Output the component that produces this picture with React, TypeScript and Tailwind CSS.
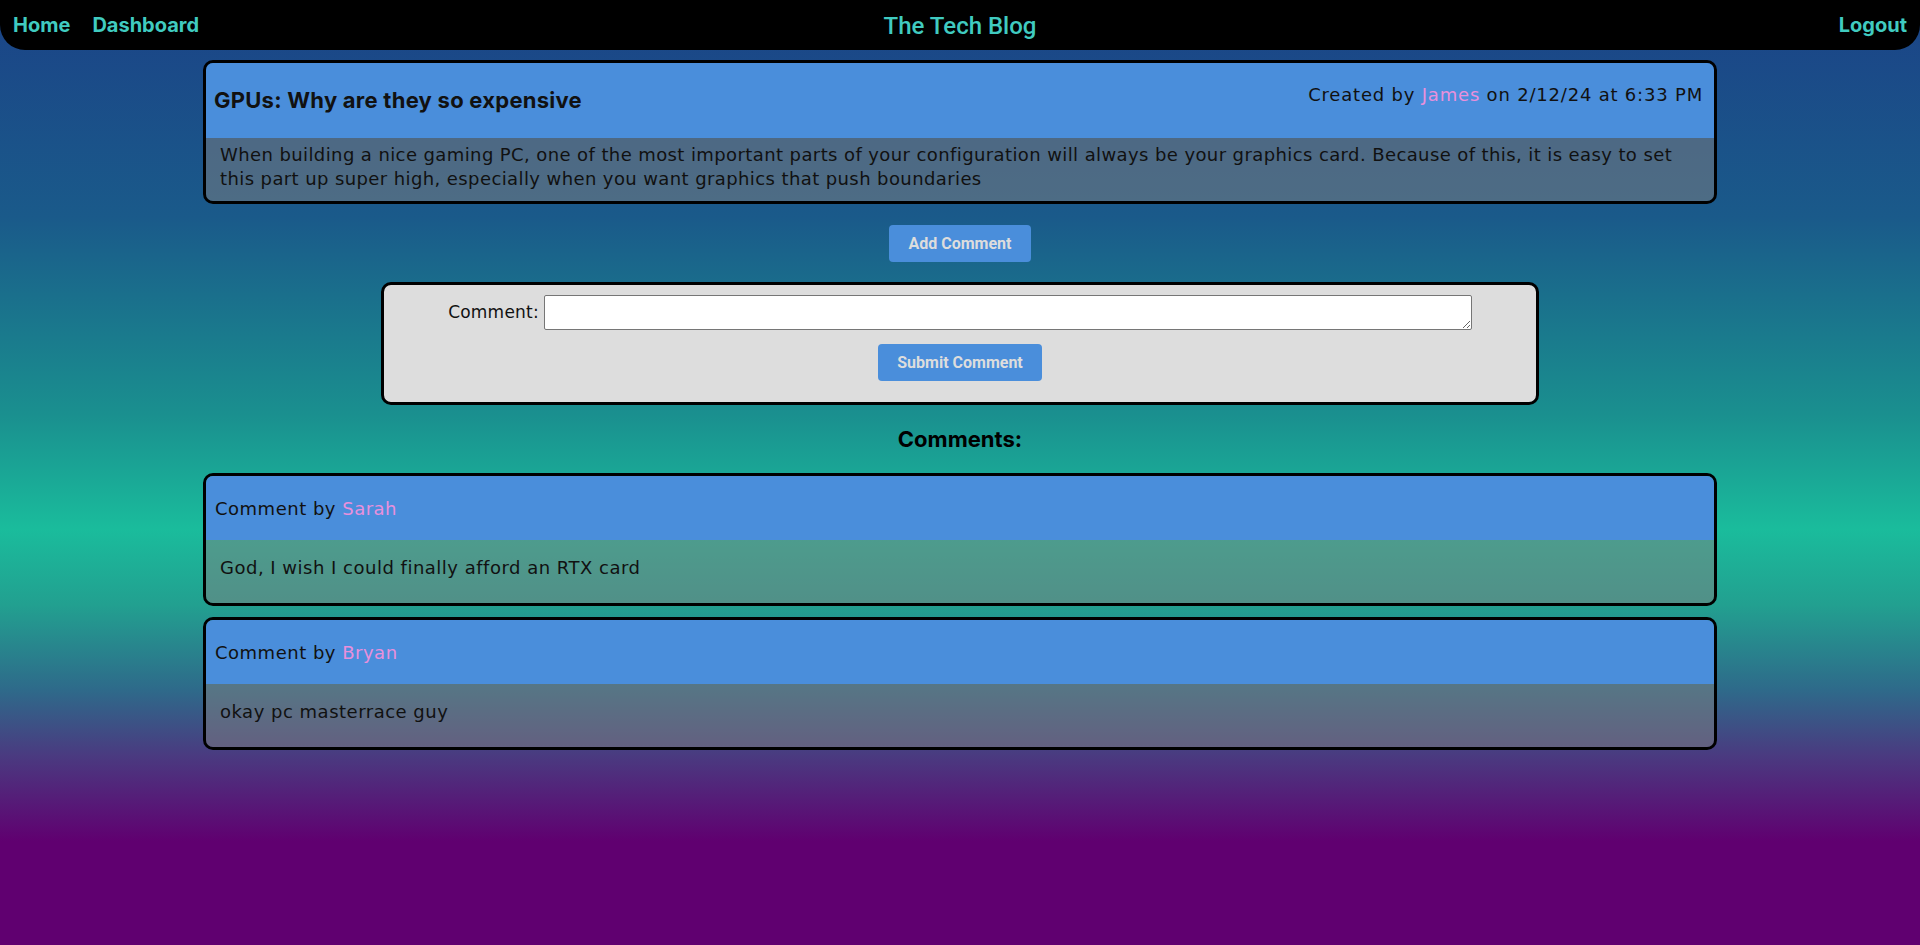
import React from "react";

const F = { fontFamily: "Inter, 'Noto Sans', sans-serif" };
const D = { fontFamily: "'DejaVu Sans', Inter, sans-serif" };
const R = { fontFamily: "Roboto, 'Liberation Sans', sans-serif" };

function CommentCard({ name, text }: { name: string; text: string }) {
  return (
    <div className="w-[1514px] border-[3px] border-black rounded-[10px] overflow-hidden">
      <div
        style={D}
        className="h-[64px] bg-[#4a8edb] flex items-center pl-[9px] text-[18px] tracking-[0.5px] text-[#111]"
      >
        <span>
          Comment by <span className="text-[#e990dc]">{name}</span>
        </span>
      </div>
      <div
        style={D}
        className="h-[63px] bg-[rgba(128,128,128,0.5)] flex items-center pl-[14px] pb-[9px] text-[18px] tracking-[0.5px] text-[#111]"
      >
        {text}
      </div>
    </div>
  );
}

export default function App() {
  return (
    <div
      style={F}
      className="min-h-[945px] w-full bg-[linear-gradient(180deg,#1b4387_0%,#1a5a8a_23%,#1a908f_44%,#1abc9c_56%,#22a090_64%,#2e6a8a_73%,#4a3a80_80%,#600070_89%,#600070_100%)]"
    >
      <nav className="h-[50px] bg-black rounded-b-[25px] flex items-center justify-between px-[13px] relative">
        <div className="flex gap-[22px] text-[20px] font-bold text-[#40cbc0]">
          <span>Home</span>
          <span>Dashboard</span>
        </div>
        <div
          style={R}
          className="absolute left-1/2 -translate-x-1/2 top-[8px] text-[24px] font-medium text-[#40cbc0]"
        >
          The Tech Blog
        </div>
        <span className="text-[20px] font-bold text-[#40cbc0]">Logout</span>
      </nav>

      <div className="flex flex-col items-center">
        <div className="mt-[10px] w-[1514px] border-[3px] border-black rounded-[10px] overflow-hidden">
          <div className="h-[75px] bg-[#4a8edb] flex items-center justify-between pl-[8px] pr-[11px]">
            <h2 className="text-[22px] font-bold text-[#111] tracking-[0.25px]">GPUs: Why are they so expensive</h2>
            <p style={D} className="text-[18px] tracking-[0.8px] text-[#111] mb-[13px]">
              Created by <span className="text-[#e990dc]">James</span> on 2/12/24 at 6:33 PM
            </p>
          </div>
          <div
            style={D}
            className="bg-[rgba(128,128,128,0.5)] pl-[14px] pr-[20px] pt-[5px] pb-[10px] text-[18px] tracking-[0.4px] leading-[24px] text-[#111]"
          >
            When building a nice gaming PC, one of the most important parts of your configuration will always be your
            graphics card. Because of this, it is easy to set this part up super high, especially when you want graphics
            that push boundaries
          </div>
        </div>

        <button
          style={R}
          className="mt-[21px] h-[37px] w-[142px] bg-[#4a8edb] rounded-[4px] text-[16px] font-bold text-[#dddddd]"
        >
          Add Comment
        </button>

        <div className="mt-[20px] w-[1158px] bg-[#dddddd] border-[3px] border-black rounded-[10px] flex flex-col items-center pt-[10px] pb-[21px]">
          <div className="flex items-center gap-[5px]">
            <span style={D} className="text-[17px] tracking-[0.2px] text-[#111]">
              Comment:
            </span>
            <textarea className="w-[928px] h-[35px] bg-white border border-[#767676] rounded-[2px] resize-y" />
          </div>
          <button
            style={R}
            className="mt-[14px] h-[37px] w-[164px] bg-[#4a8edb] rounded-[4px] text-[16px] font-bold text-[#dddddd]"
          >
            Submit Comment
          </button>
        </div>

        <h3 className="mt-[19px] text-[22px] font-bold text-black leading-[30px]">Comments:</h3>

        <div className="mt-[19px] flex flex-col gap-[11px]">
          <CommentCard name="Sarah" text="God, I wish I could finally afford an RTX card" />
          <CommentCard name="Bryan" text="okay pc masterrace guy" />
        </div>
      </div>
    </div>
  );
}
